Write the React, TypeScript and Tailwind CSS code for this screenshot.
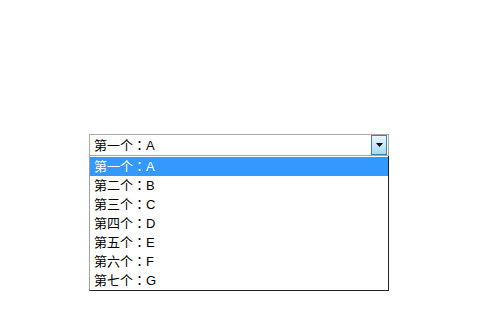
const items = ["第一个：A", "第二个：B", "第三个：C", "第四个：D", "第五个：E", "第六个：F", "第七个：G"];

export default function App() {
  return (
    <div className="h-[325px] w-[493px] bg-white pl-[89px] pt-[134px] font-['Liberation_Sans','Noto_Sans_CJK_TC',sans-serif] text-[13px] text-black">
      <div className="w-[300px]">
        <div className="flex h-[22px] items-center border border-[#a9a9a9] bg-white">
          <span className="flex-1 pl-[4px] pt-px leading-none">{items[0]}</span>
          <span className="mr-px flex h-[20px] w-[16px] items-center justify-center border border-[#3c7fb1] bg-gradient-to-b from-[#eaf6fd] to-[#a7d9f5]">
            <svg width="7" height="4" viewBox="0 0 7 4">
              <path d="M0 0h7L3.5 4z" fill="#000" />
            </svg>
          </span>
        </div>
        <div className="border-l border-l-[#a0a0a0] border-r border-r-[#222] border-b border-b-[#222] bg-white pt-px">
          {items.map((t, i) => (
            <div
              key={t}
              className={`flex h-[19px] items-center pl-[4px] pt-px ${i === 0 ? "bg-[#3399ff] text-white" : ""}`}
            >
              {t}
            </div>
          ))}
        </div>
      </div>
    </div>
  );
}
